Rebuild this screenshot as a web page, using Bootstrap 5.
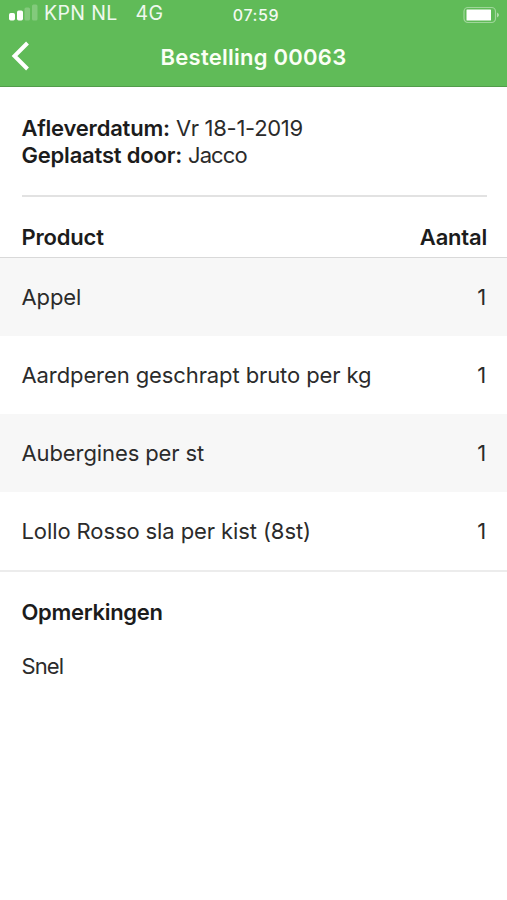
<!DOCTYPE html>
<html lang="nl">
<head>
<meta charset="utf-8">
<meta name="viewport" content="width=device-width, initial-scale=1">
<title>Bestelling 00063</title>
<link href="https://cdn.jsdelivr.net/npm/bootstrap@5.3.0/dist/css/bootstrap.min.css" rel="stylesheet">
<style>
body{font-family:Inter,"Liberation Sans",sans-serif;font-size:22px;line-height:27px;color:#2b2b2b;letter-spacing:-.2px}
b,h1,h2{color:#1c1c1c;font-weight:600}
.app-header{background:#60bb58;height:87px;border-bottom:1px solid #529c4b}
.status-bar{height:29px}
.carrier{font-size:19.5px;line-height:27px;letter-spacing:.35px;color:#eff8ee}
.network{margin-left:18px}
.clock{font-size:16px;font-weight:500;line-height:30px;letter-spacing:.6px;padding-left:5px;color:#f2faf1}
.title-bar{height:56px}
.title-bar h1{font-size:22px;line-height:56px;letter-spacing:.25px;color:#fbfff5}
.page-pad{padding-left:21.5px;padding-right:20px}
.meta{padding-top:28px;padding-bottom:26px}
.meta span{letter-spacing:-.3px}
.meta .placed-by{letter-spacing:-.9px}
.rule{height:2px;background:#e2e2e2}
.table-head{height:61px;padding-top:27px;border-bottom:1px solid #d9d9d9}
.order-row{height:78px;letter-spacing:-.1px}
.order-row span:last-child{padding-right:1px}
.order-row:nth-child(odd){background:#f7f7f7}
.order-list{border-bottom:2px solid #ececec}
.remarks{padding-top:27px}
.remarks h2{font-size:22px;line-height:27px;letter-spacing:-.3px;margin-bottom:27px}
.remarks p{letter-spacing:-.9px}
</style>
<script src="https://cdn.jsdelivr.net/npm/bootstrap@5.3.0/dist/js/bootstrap.bundle.min.js"></script>
</head>
<body class="bg-white">
<header class="app-header text-white">
  <div class="status-bar row g-0">
    <div class="col-5 d-flex align-items-start carrier">
      <svg class="ms-2" width="36" height="26" viewBox="0 0 36 26" fill="#fff"><rect x="1" y="13" width="6" height="7.5" rx="1.7"/><rect x="9" y="10.500" width="6" height="10" rx="1.700"/><rect x="16.500" y="7.500" width="5.500" height="13" rx="1.500" opacity=".22"/><rect x="24" y="4.500" width="5.500" height="16" rx="1.500" opacity=".22"/></svg>
      <span>KPN NL</span><span class="network">4G</span>
    </div>
    <div class="col-2 text-center clock">07:59</div>
    <div class="col-5 d-flex justify-content-end">
      <svg width="45" height="29" viewBox="0 0 45 29"><rect x="2" y="7.500" width="31.500" height="15" rx="4" fill="none" stroke="#fff" stroke-opacity=".4" stroke-width="1.200"/><rect x="4.500" y="9.500" width="24.500" height="11" rx=".5" fill="#fff"/><path d="M35 12.500q4 2.500 0 5z" fill="#fff" fill-opacity=".5"/></svg>
    </div>
  </div>
  <div class="title-bar row g-0">
    <div class="col-2"><svg width="40" height="56" viewBox="0 0 40 56"><path d="M27.500 14 14.500 27l13 13" fill="none" stroke="#fff" stroke-width="4"/></svg></div>
    <h1 class="col-8 text-center m-0">Bestelling 00063</h1>
  </div>
</header>
<main>
  <section class="page-pad">
    <div class="meta">
      <div><b>Afleverdatum:</b> <span>Vr 18-1-2019</span></div>
      <div><b>Geplaatst door:</b> <span class="placed-by">Jacco</span></div>
    </div>
    <div class="rule"></div>
  </section>
  <div class="table-head page-pad d-flex justify-content-between"><b>Product</b><b>Aantal</b></div>
  <div class="order-list">
    <div class="order-row page-pad d-flex justify-content-between align-items-center"><span>Appel</span><span>1</span></div>
    <div class="order-row page-pad d-flex justify-content-between align-items-center"><span>Aardperen geschrapt bruto per kg</span><span>1</span></div>
    <div class="order-row page-pad d-flex justify-content-between align-items-center"><span>Aubergines per st</span><span>1</span></div>
    <div class="order-row page-pad d-flex justify-content-between align-items-center"><span>Lollo Rosso sla per kist (8st)</span><span>1</span></div>
  </div>
  <section class="remarks page-pad">
    <h2>Opmerkingen</h2>
    <p class="m-0">Snel</p>
  </section>
</main>
</body>
</html>
